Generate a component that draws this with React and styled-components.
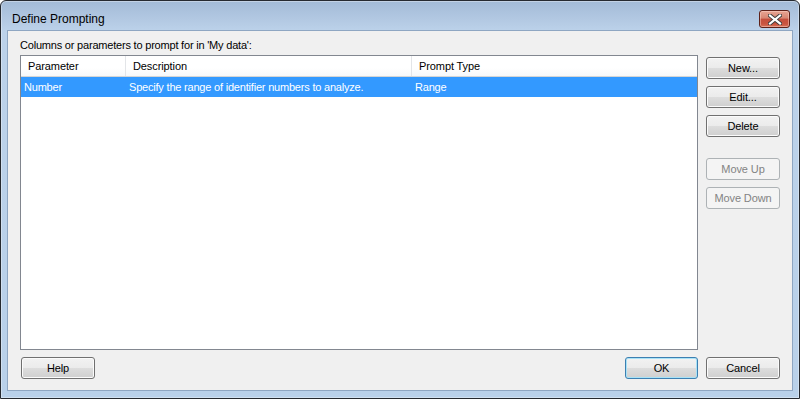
import React from "react";
import styled, { createGlobalStyle } from "styled-components";

const GlobalStyle = createGlobalStyle`
  html, body {
    margin: 0;
    padding: 0;
    background: #ffffff;
  }
  * {
    box-sizing: border-box;
  }
`;

const Window = styled.div`
  width: 800px;
  height: 399px;
  border: 1px solid #262a30;
  border-radius: 6px 6px 0 0;
  background: linear-gradient(#a3bbd7 0px, #b2c8e2 18px, #bcd2ea 30px, #b9d1ea 100%);
  box-shadow: inset 0 0 0 1px rgba(255, 255, 255, 0.35);
  display: flex;
  flex-direction: column;
  padding: 0 6px 7px 6px;
  font-family: "Liberation Sans", Arial, sans-serif;
  font-size: 11px;
  letter-spacing: -0.2px;
  color: #000;
`;

const TitleBar = styled.div`
  height: 29px;
  display: flex;
  align-items: flex-start;
  justify-content: space-between;
  padding: 0 3px 0 5px;
`;

const Title = styled.div`
  font-size: 12px;
  letter-spacing: 0;
  line-height: 15px;
  padding-top: 11px;
  color: #000;
`;

const CloseButton = styled.button`
  margin-top: 9px;
  width: 31px;
  height: 18px;
  padding: 0;
  border: 1px solid #5e2119;
  border-radius: 3px;
  background: linear-gradient(#e8a593 0%, #d88673 45%, #c54f3d 50%, #c9533f 80%, #d8735a 100%);
  box-shadow: inset 0 0 0 1px rgba(255, 220, 210, 0.45);
  display: flex;
  align-items: center;
  justify-content: center;
`;

const Client = styled.div`
  flex: 1;
  border: 1px solid #8ea6c2;
  background: #f0f0f0;
  display: grid;
  grid-template-columns: 1fr 74px;
  grid-template-rows: auto 1fr auto;
  column-gap: 8px;
  padding: 8px 12px 11px 12px;
`;

const Caption = styled.div`
  grid-column: 1 / 3;
  line-height: 13px;
  margin-bottom: 3px;
`;

const List = styled.div`
  border: 1px solid #828790;
  background: #ffffff;
  display: flex;
  flex-direction: column;
  overflow: hidden;
`;

const Columns = "105px 286px 1fr";

const HeaderRow = styled.div`
  display: grid;
  grid-template-columns: ${Columns};
  height: 21px;
  background: linear-gradient(#ffffff 0%, #ffffff 60%, #f7f8fa 100%);
  border-bottom: 1px solid #d5d5d5;
`;

const HeaderCell = styled.div`
  padding: 0 7px;
  line-height: 20px;
  font-size: 11px;
  letter-spacing: -0.1px;
  color: #000;
  border-right: 1px solid ${(p) => (p.last ? "transparent" : "#e3e5e8")};
  white-space: nowrap;
`;

const Row = styled.div`
  display: grid;
  grid-template-columns: ${Columns};
  height: 20px;
  background: ${(p) => (p.selected ? "#3399ff" : "transparent")};
  color: ${(p) => (p.selected ? "#ffffff" : "#000000")};
`;

const Cell = styled.div`
  padding: 0 3px;
  line-height: 20px;
  white-space: nowrap;
`;

const SideButtons = styled.div`
  display: flex;
  flex-direction: column;
  padding-top: 2px;
  gap: 7px;
`;

const Spacer = styled.div`
  height: 7px;
`;

const Button = styled.button`
  width: 74px;
  height: 22px;
  padding: 0;
  font-family: "Liberation Sans", Arial, sans-serif;
  font-size: 11px;
  letter-spacing: -0.1px;
  border-radius: 3px;
  border: 1px solid ${(p) => (p.disabled ? "#adb2b5" : p.primary ? "#3c7fb1" : "#707070")};
  color: ${(p) => (p.disabled ? "#838383" : "#000000")};
  background: ${(p) =>
    p.disabled
      ? "#f4f4f4"
      : "linear-gradient(#f2f2f2 0%, #ebebeb 50%, #dddddd 51%, #cfcfcf 100%)"};
  box-shadow: inset 0 0 0 1px
    ${(p) => (p.disabled ? "#f4f4f4" : p.primary ? "#a8e2f7" : "#fbfbfb")};
`;

const Footer = styled.div`
  grid-column: 1 / 3;
  display: flex;
  align-items: center;
  justify-content: space-between;
  margin-top: 7px;
  padding-left: 1px;
`;

const FooterRight = styled.div`
  display: flex;
  gap: 8px;
`;

const OkButton = styled(Button)`
  width: 73px;
`;

function CloseGlyph() {
  return (
    <svg width="14" height="11" viewBox="0 0 14 11">
      <path
        d="M2 1.5 L7 5.5 L12 1.5 M2 9.5 L7 5.5 L12 9.5"
        stroke="#3b3b3b"
        strokeWidth="4"
        fill="none"
        strokeLinecap="square"
      />
      <path
        d="M2 1.5 L7 5.5 L12 1.5 M2 9.5 L7 5.5 L12 9.5"
        stroke="#ffffff"
        strokeWidth="2.2"
        fill="none"
        strokeLinecap="square"
      />
    </svg>
  );
}

const rows = [
  {
    name: "Number",
    description: "Specify the range of identifier numbers to analyze.",
    type: "Range",
  },
];

export default function App() {
  return (
    <>
      <GlobalStyle />
      <Window>
        <TitleBar>
          <Title>Define Prompting</Title>
          <CloseButton aria-label="Close">
            <CloseGlyph />
          </CloseButton>
        </TitleBar>
        <Client>
          <Caption>Columns or parameters to prompt for in 'My data':</Caption>
          <List>
            <HeaderRow>
              <HeaderCell>Parameter</HeaderCell>
              <HeaderCell>Description</HeaderCell>
              <HeaderCell last>Prompt Type</HeaderCell>
            </HeaderRow>
            {rows.map((r) => (
              <Row key={r.name} selected>
                <Cell>{r.name}</Cell>
                <Cell>{r.description}</Cell>
                <Cell>{r.type}</Cell>
              </Row>
            ))}
          </List>
          <SideButtons>
            <Button>New...</Button>
            <Button>Edit...</Button>
            <Button>Delete</Button>
            <Spacer />
            <Button disabled>Move Up</Button>
            <Button disabled>Move Down</Button>
          </SideButtons>
          <Footer>
            <Button>Help</Button>
            <FooterRight>
              <OkButton primary>OK</OkButton>
              <Button>Cancel</Button>
            </FooterRight>
          </Footer>
        </Client>
      </Window>
    </>
  );
}
